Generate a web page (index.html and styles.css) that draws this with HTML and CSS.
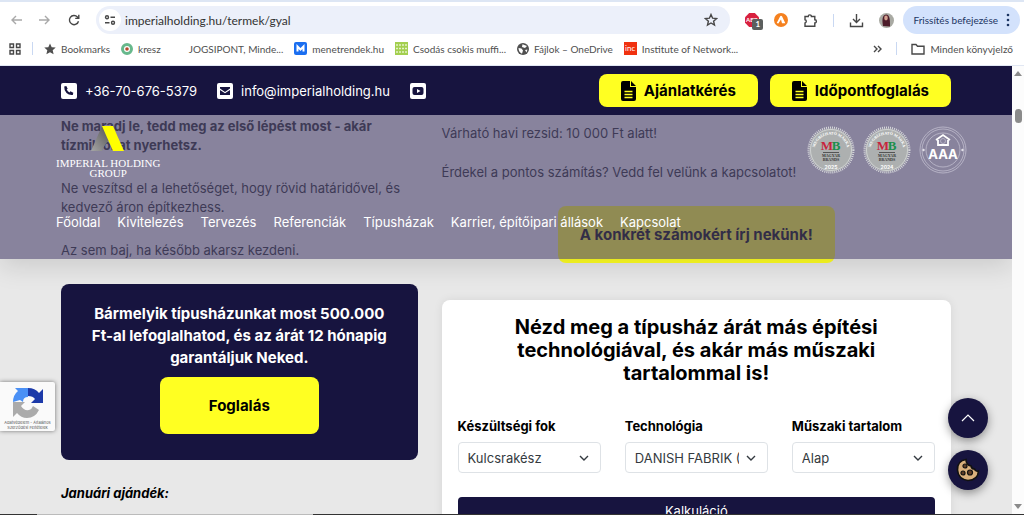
FILE: index.html
```html
<!DOCTYPE html>
<html lang="hu">
  <head>
    <meta charset="UTF-8" />
    <meta name="viewport" content="width=device-width, initial-scale=1.0" />
    <title>Imperial Holding - Gyál</title>
    <link rel="stylesheet" href="styles.css">
  </head>
  <body>
    <!-- Browser toolbar -->
    <div class="toolbar">
      <button class="tool" aria-label="Vissza"><svg class="faded" width="14" height="14" viewBox="0 0 14 14"><path d="M13 7H3M7 3L3 7l4 4" /></svg></button>
      <button class="tool" aria-label="Előre"><svg class="faded" width="14" height="14" viewBox="0 0 14 14"><path d="M1 7h10M7 3l4 4-4 4" /></svg></button>
      <button class="tool" aria-label="Újratöltés"><svg width="14" height="14" viewBox="0 0 14 14"><path d="M11.5 8.2A4.6 4.6 0 1 1 10.4 3.900L11.600 5.200M11.800 1.800v3.600H8.200" /></svg></button>
      <div class="address">
        <span class="site-info"><svg width="12" height="12" viewBox="0 0 12 12"><circle cx="3" cy="3.200" r="1.500" /><path d="M6.500 3.200H11M1 8.800h4.500" /><circle cx="9" cy="8.800" r="1.500" /></svg></span>
        <input class="url" type="text" value="imperialholding.hu/termek/gyal" aria-label="Cím" />
        <svg width="14" height="14" viewBox="0 0 14 14"><path d="M7 1.500l1.600 3.700 4 .4-3 2.600.9 3.900L7 10l-3.500 2.100.9-3.900-3-2.600 4-.4z" /></svg>
      </div>
      <div class="extensions">
        <span class="abp">
          <svg width="14" height="14" viewBox="0 0 14 14"><path class="abp-bg" d="M4.200 0h5.600L14 4.200v5.600L9.800 14H4.200L0 9.800V4.200z" /><text x="1" y="9">ABP</text></svg>
          <b>1</b>
        </span>
        <svg width="14" height="14" viewBox="0 0 14 14"><circle class="avast" cx="7" cy="7" r="7" /><path class="avast-a" d="M6.200 3.200L2.700 10l1.600.5L7 6.500l1 3.700h3.300L8 3.300q-1-1-1.800-.1z" /></svg>
        <svg width="15" height="15" viewBox="0 0 15 15"><path d="M2 3.500h3.200a1.600 1.600 0 0 1 3.200 0h3.400v3.200a1.600 1.600 0 0 1 0 3.200v3.300H2V10a1.700 1.700 0 0 0 0-3.300z" /></svg>
        <i class="bar"></i>
        <svg width="15" height="15" viewBox="0 0 15 15"><path d="M7.500 1v8M4 6l3.500 3.500L11 6M1.500 9.500v4h12v-4" /></svg>
        <svg width="15" height="15" viewBox="0 0 15 15"><circle class="face-bg" cx="7.500" cy="7.500" r="7.500" /><path class="face-hair" d="M4 13C3 8 3 2 7 1.500c4 0 4 6 4 12z" /><ellipse class="face" cx="7" cy="5" rx="1.800" ry="2.400" /></svg>
      </div>
      <button class="update">Frissítés befejezése <svg width="4" height="14" viewBox="0 0 4 14"><circle cx="2" cy="2" r="1.300" /><circle cx="2" cy="7" r="1.300" /><circle cx="2" cy="12" r="1.300" /></svg></button>
    </div>

    <!-- Bookmarks -->
    <div class="bookmarks">
      <svg class="apps" width="12" height="12" viewBox="0 0 12 12"><path d="M1 1h3.500v3.500H1zM7.500 1H11v3.500H7.500zM1 7.500h3.500V11H1zM7.500 7.500H11V11H7.500z" /></svg>
      <i class="bar"></i>
      <a href="#"><svg width="12" height="12" viewBox="0 0 12 12"><path class="solid" d="M6 .5l1.700 3.700 4 .4-3 2.700.9 4L6 9.200l-3.600 2.100.9-4-3-2.700 4-.4z" /></svg>Bookmarks</a>
      <a href="#"><svg width="12" height="12" viewBox="0 0 12 12"><circle cx="6" cy="6" r="4.500" class="kresz" /><circle cx="6" cy="6" r="1.800" class="kresz-dot" /></svg>kresz</a>
      <a href="#"><span class="fav"></span>JOGSIPONT, Minde...</a>
      <a href="#"><svg width="13" height="13" viewBox="0 0 13 13"><rect class="blue" width="13" height="13" rx="2" /><path class="white-line" d="M3.500 9.500v-5l3 3 3-3v5" /></svg>menetrendek.hu</a>
      <a href="#"><svg width="13" height="13" viewBox="0 0 13 13"><rect class="green" width="13" height="13" /><path class="dash" d="M1 3h11M1 6.500h11M1 10h11" /></svg>Csodás csokis muffi...</a>
      <a href="#"><svg width="12" height="12" viewBox="0 0 12 12"><circle class="solid" cx="6" cy="6" r="6" /><path class="land" d="M1.500 5l3 .5 1.500 2-1 3.200Q1.500 9 1.500 5zM5.500 1.200L10 3l-2 2-3-1zM8 7l2.500-.5-1 3z" /></svg>Fájlok – OneDrive</a>
      <a href="#"><svg class="inc" width="13" height="13" viewBox="0 0 13 13"><rect width="13" height="13" /><text x="1" y="9">inc</text></svg>Institute of Network...</a>
      <div class="more">
        <svg width="9" height="10" viewBox="0 0 9 10"><path d="M1 2l3 3-3 3M5 2l3 3-3 3" /></svg>
        <i class="bar"></i>
        <a href="#"><svg width="14" height="12" viewBox="0 0 14 12"><path d="M1 1.500h4l1.500 1.700H13V11H1z" /></svg>Minden könyvjelző</a>
      </div>
    </div>

    <div class="window">
      <div class="page">
        <!-- Header -->
        <header class="header">
          <div class="topbar">
            <a href="#"><svg width="16" height="16" viewBox="0 0 16 16"><rect width="16" height="16" rx="2" /><path class="navy" d="M5.300 3l1.400 2.700-1 .9q1 2 2.800 2.800l.9-1.100 2.900 1.400-.5 2.300Q8 12.500 5.500 10T3.200 3.500z" /></svg>+36-70-676-5379</a>
            <a href="#"><svg width="16" height="16" viewBox="0 0 16 16"><rect width="16" height="16" rx="2" /><path class="navy" d="M3 4h10v1.600L8 9 3 5.600zM3 7l5 3.300L13 7v5H3z" /></svg>info@imperialholding.hu</a>
            <a href="#" aria-label="YouTube"><svg width="16" height="16" viewBox="0 0 16 16"><rect width="16" height="16" rx="2" /><rect class="navy" x="2.500" y="4" width="11" height="8" rx="2" /><path d="M7 6l3.500 2L7 10z" /></svg></a>
            <div class="actions">
              <button class="yellow"><svg width="15" height="20" viewBox="0 0 15 20"><path d="M2 0h7v6h6v12q0 2-2 2H2q-2 0-2-2V2q0-2 2-2zM10 0l5 5h-5z" /><path class="lines" d="M3.500 10.500h8M3.500 13.500h8M3.500 16.500h8" /></svg>Ajánlatkérés</button>
              <button class="yellow"><svg width="15" height="20" viewBox="0 0 15 20"><path d="M2 0h7v6h6v12q0 2-2 2H2q-2 0-2-2V2q0-2 2-2zM10 0l5 5h-5z" /><path class="lines" d="M3.500 10.500h8M3.500 13.500h8M3.500 16.500h8" /></svg>Időpontfoglalás</button>
            </div>
          </div>
          <div class="menu">
            <div class="brand">
              <a class="logo" href="#">
                <svg width="34" height="26" viewBox="0 0 34 26">
                  <defs><linearGradient id="leg" x1="0" y1="1" x2="1" y2="0"><stop offset="0" stop-color="#a6a6a6" /><stop offset="1" stop-color="#505050" /></linearGradient></defs>
                  <path fill="url(#leg)" d="M11 0h2l6 14q-5 3-8 11H0z" />
                  <path fill="#ff0" d="M11 0h11l11 25H22z" />
                </svg>
                <span>IMPERIAL HOLDING<br />GROUP</span>
              </a>
              <div class="awards">
                <svg class="award" width="48" height="48" viewBox="0 0 48 48">
                  <defs><path id="arc" d="M7.500 25a16.500 16.500 0 0 1 33 0" /></defs>
                  <circle class="teeth" cx="24" cy="24" r="22" /><circle class="disc" cx="24" cy="24" r="21.500" /><circle class="ring" cx="24" cy="24" r="20.500" />
                  <text class="around"><textPath href="#arc" startOffset="50%">MEGBÍZHATÓ MÁRKA</textPath></text>
                  <text class="m" x="20" y="24">M</text><text class="b" x="29" y="24">B</text>
                  <path class="rule" d="M16 26.500h16" /><text class="tiny" x="24" y="31">MAGYAR</text><text class="tiny" x="24" y="35">BRANDS</text><text class="year" x="24" y="43">2025</text>
                </svg>
                <svg class="award" width="48" height="48" viewBox="0 0 48 48">
                  <circle class="teeth" cx="24" cy="24" r="22" /><circle class="disc" cx="24" cy="24" r="21.500" /><circle class="ring" cx="24" cy="24" r="20.500" />
                  <text class="around"><textPath href="#arc" startOffset="50%">MEGBÍZHATÓ MÁRKA</textPath></text>
                  <text class="m" x="20" y="24">M</text><text class="b" x="29" y="24">B</text>
                  <path class="rule" d="M16 26.500h16" /><text class="tiny" x="24" y="31">MAGYAR</text><text class="tiny" x="24" y="35">BRANDS</text><text class="year" x="24" y="43">2024</text>
                </svg>
                <svg class="rating" width="48" height="48" viewBox="0 0 48 48">
                  <circle cx="24" cy="24" r="23" /><circle cx="24" cy="24" r="21" /><circle cx="24" cy="24" r="17" />
                  <path class="roof" d="M17 14l7-5 7 5M19 14v5h10v-5" /><circle cx="24" cy="15" r="2.500" /><circle class="dot" cx="4.500" cy="24" r="1" /><circle class="dot" cx="43.500" cy="24" r="1" />
                  <text x="24" y="33">AAA</text>
                </svg>
              </div>
            </div>
            <nav>
              <a href="#">Főoldal</a>
              <a href="#">Kivitelezés</a>
              <a href="#">Tervezés</a>
              <a href="#">Referenciák</a>
              <a href="#">Típusházak</a>
              <a href="#">Karrier, építőipari állások</a>
              <a href="#">Kapcsolat</a>
            </nav>
          </div>
        </header>

        <!-- Content -->
        <main class="content">
          <section class="left">
            <p><strong>Ne maradj le, tedd meg az első lépést most - akár tízmilliókat nyerhetsz.</strong></p>
            <p>Ne veszítsd el a lehetőséget, hogy rövid határidővel, és kedvező áron építkezhess.</p>
            <p>Az sem baj, ha később akarsz kezdeni.</p>
            <div class="booking">
              <h3>Bármelyik típusházunkat most 500.000 Ft-al lefoglalhatod, és az árát 12 hónapig garantáljuk Neked.</h3>
              <button class="yellow big">Foglalás</button>
            </div>
            <p class="gift">Januári ajándék:</p>
          </section>
          <section class="right">
            <p>Várható havi rezsid: 10 000 Ft alatt!</p>
            <p>Érdekel a pontos számítás? Vedd fel velünk a kapcsolatot!</p>
            <button class="yellow big">A konkrét számokért írj nekünk!</button>
            <div class="calculator">
              <h2>Nézd meg a típusház árát más építési technológiával, és akár más műszaki tartalommal is!</h2>
              <form class="fields">
                <div class="field">
                  <label for="fok">Készültségi fok</label>
                  <div class="select">
                    <select id="fok"><option>Kulcsrakész</option></select>
                    <svg width="10" height="6" viewBox="0 0 10 6"><path d="M1 1l4 4 4-4" /></svg>
                  </div>
                </div>
                <div class="field">
                  <label for="tech">Technológia</label>
                  <div class="select">
                    <select id="tech"><option>DANISH FABRIK (Tégla)</option></select>
                    <svg width="10" height="6" viewBox="0 0 10 6"><path d="M1 1l4 4 4-4" /></svg>
                  </div>
                </div>
                <div class="field">
                  <label for="tartalom">Műszaki tartalom</label>
                  <div class="select">
                    <select id="tartalom"><option>Alap</option></select>
                    <svg width="10" height="6" viewBox="0 0 10 6"><path d="M1 1l4 4 4-4" /></svg>
                  </div>
                </div>
              </form>
              <div class="result">Kalkuláció</div>
            </div>
          </section>
        </main>

        <div class="recaptcha">
          <svg width="32" height="32" viewBox="0 0 32 32">
            <path fill="#4a90f5" d="M1 15Q1 8 6 4L3 1h13v9q-5 0-5 5l-3-2z" />
            <path fill="#1c3aa9" d="M16 1q7 0 11 5l4-4v14H19l4-4q-2-3-7-3z" />
            <path fill="#ababab" d="M1 15h12l-4 4q3 5 8 4 3-1 4-4l6 4q-4 8-12 8-6 0-10-5l-4 4z" />
          </svg>
          <span>Adatvédelem - Általános Szerződési Feltételek</span>
        </div>

        <div class="floating">
          <button aria-label="Fel"><svg width="14" height="8" viewBox="0 0 14 8"><path d="M1 7l6-6 6 6" /></svg></button>
          <button aria-label="Sütik"><svg width="24" height="24" viewBox="0 0 24 24"><path class="cookie" d="M10 1.500Q1 3 1.500 12 2 21 12 22.500q10-.5 10.500-9.500-3 1-4-2-3 0-3.500-3Q10 7 10 1.500z" /><circle cx="9" cy="8" r="2" /><circle cx="7" cy="15" r="2" /><circle cx="14" cy="14.500" r="2.500" /></svg></button>
        </div>
      </div>
      <div class="scrollbar">
        <svg width="8" height="5" viewBox="0 0 8 5"><path d="M0 5l4-5 4 5z" /></svg>
        <i class="thumb"></i>
        <svg class="down" width="8" height="5" viewBox="0 0 8 5"><path d="M0 0l4 5 4-5z" /></svg>
      </div>
    </div>
    <div class="taskbar"></div>
  </body>
</html>
```

FILE: styles.css
```css
* {
  box-sizing: border-box;
}
body {
  font-family: Inter, sans-serif;
  margin: 0;
  height: 100vh;
  display: flex;
  flex-direction: column;
  overflow: hidden;
  font-size: 13px;
  color: #212529;
}
a {
  color: inherit;
  text-decoration: none;
}
button {
  font-family: inherit;
  border: none;
  cursor: pointer;
}
svg {
  display: block;
  flex: none;
}

/* Browser */
.toolbar {
  display: flex;
  align-items: center;
  height: 38px;
  padding: 0 4px 0 9px;
  border-top: 2px solid #dde6f4;
  background-color: #fff;
  font-family: Lato, sans-serif;
}
.toolbar svg,
.bookmarks svg {
  fill: none;
  stroke: #474747;
  stroke-width: 1.4;
}
.tool {
  background: none;
  padding: 0;
  margin-right: 15px;
}
.toolbar .faded {
  stroke: #a9a9a9;
}
.address {
  flex: 1;
  display: flex;
  align-items: center;
  height: 28px;
  padding: 0 12px 0 3px;
  border-radius: 14px;
  background-color: #ecf0fa;
}
.site-info {
  padding: 5px;
  border-radius: 50%;
  background-color: #fff;
}
.url {
  flex: 1;
  min-width: 0;
  border: none;
  background: none;
  padding: 0 4px;
  font-family: Lato, sans-serif;
  font-size: 12px;
  color: #333;
}
.extensions {
  display: flex;
  align-items: center;
  gap: 15px;
  padding: 0 9px 0 15px;
}
.bar {
  width: 1px;
  height: 13px;
  background-color: #c9d8f2;
}
.abp {
  position: relative;
}
.toolbar .abp-bg {
  fill: #d8213f;
  stroke: none;
}
.abp text {
  font-size: 6px;
  font-weight: bold;
  fill: #fff;
  stroke: none;
}
.abp b {
  position: absolute;
  left: 7px;
  top: 6px;
  padding: 0 3px;
  border-radius: 2px;
  background-color: #5b5f5e;
  color: #fff;
  font-size: 8px;
  line-height: 11px;
}
.avast {
  fill: #f5811f;
  stroke: none;
}
.avast-a {
  fill: #fff;
  stroke: none;
}
.face-bg {
  fill: #a9aaa3;
  stroke: none;
}
.face-hair {
  fill: #4d1c2a;
  stroke: none;
}
.face {
  fill: #d3a08e;
  stroke: none;
}
.update {
  display: flex;
  align-items: center;
  gap: 8px;
  height: 28px;
  padding: 0 10px;
  border-radius: 14px;
  background-color: #d3e2fc;
  color: #1c3563;
  font-size: 10px;
}
.toolbar .update svg {
  fill: #1c3563;
  stroke: none;
}
.bookmarks {
  display: flex;
  align-items: center;
  gap: 11px;
  height: 28px;
  padding: 0 11px 6px 9px;
  border-bottom: 1px solid #e1e7f3;
  background-color: #fff;
  color: #4f4f4f;
  font-family: Lato, sans-serif;
  font-size: 10px;
  white-space: nowrap;
}
.bookmarks a {
  display: flex;
  align-items: center;
  gap: 5px;
}
.fav {
  width: 12px;
}
.bookmarks .solid {
  fill: #4f4f4f;
  stroke: none;
}
.kresz {
  stroke: #67b88c;
  stroke-width: 3;
}
.kresz-dot {
  fill: #b5482d;
  stroke: none;
}
.blue {
  fill: #1a6ef0;
  stroke: none;
}
.white-line {
  stroke: #fff;
  stroke-width: 2;
}
.green {
  fill: #a3cf4f;
  stroke: none;
}
.dash {
  stroke: #e4f2c6;
  stroke-dasharray: 2 1;
}
.land {
  fill: #fff;
  stroke: none;
}
.inc rect {
  fill: #f0310f;
  stroke: none;
}
.inc text {
  font-size: 8px;
  fill: #fff;
  stroke: none;
}
.more {
  display: flex;
  align-items: center;
  gap: 14px;
  margin-left: auto;
}

/* Window */
.window {
  flex: 1;
  min-height: 0;
  display: flex;
}
.page {
  flex: 1;
  position: relative;
  overflow: hidden;
  background-color: #e8e8e8;
}
.scrollbar {
  width: 12px;
  display: flex;
  flex-direction: column;
  align-items: center;
  padding: 5px 0;
  background-color: #fcfcfc;
}
.scrollbar svg {
  fill: #8b8b8b;
}
.thumb {
  width: 7px;
  height: 14px;
  margin-top: 33px;
  border-radius: 4px;
  background-color: #8b8b8b;
}
.scrollbar .down {
  margin-top: auto;
}
.taskbar {
  height: 1px;
  background: linear-gradient(to right, #333 37px, #bbb 37px, #bbb 313px, #333 313px);
}

/* Header lies over the scrolled content */
.header {
  position: absolute;
  top: 0;
  left: 0;
  right: 0;
  z-index: 2;
  color: #fff;
  box-shadow: 0 8px 24px rgba(0, 0, 0, 0.12);
}
.topbar {
  display: flex;
  align-items: center;
  gap: 20px;
  height: 49px;
  padding: 0 61px;
  background-color: #17143f;
}
.topbar a {
  display: flex;
  align-items: center;
  gap: 8px;
}
.topbar a svg {
  fill: #fff;
}
.topbar .navy {
  fill: #17143f;
}
.actions {
  display: flex;
  gap: 12px;
  margin-left: auto;
}
.yellow {
  display: flex;
  align-items: center;
  gap: 8px;
  height: 33px;
  padding: 0 22px;
  border-radius: 8px;
  background-color: #ffff22;
  color: #000;
  font-size: 15px;
  font-weight: 700;
}
.lines {
  stroke: #ffff22;
  stroke-width: 1.3;
}
.menu {
  height: 144px;
  padding: 11px 45px 0 56px;
  background-color: rgba(79, 72, 112, 0.63);
}
.brand {
  display: flex;
  justify-content: space-between;
}
.logo {
  display: flex;
  flex-direction: column;
  align-items: center;
  text-align: center;
  font-family: "Liberation Serif", serif;
  font-size: 11px;
  line-height: 10px;
}
.logo span {
  margin-top: 6px;
}
.awards {
  display: flex;
  gap: 8px;
}
.award text {
  text-anchor: middle;
  font-family: "Liberation Serif", serif;
  font-weight: bold;
}
.teeth {
  fill: none;
  stroke: #d5d6da;
  stroke-width: 3;
  stroke-dasharray: 1 1;
}
.disc {
  fill: #adb0b0;
}
.ring {
  fill: none;
  stroke: #cfd2d2;
}
.award .around {
  font-size: 4px;
  fill: #fff;
}
.award .m {
  font-size: 13px;
  fill: #c8243c;
}
.award .b {
  font-size: 13px;
  fill: #1c8f4c;
}
.rule {
  stroke: #555;
}
.award .tiny {
  font-size: 4px;
  fill: #333;
}
.award .year {
  font-family: Inter, sans-serif;
  font-size: 5px;
  fill: #fff;
}
.rating circle {
  fill: none;
  stroke: #c9c6d6;
  stroke-width: 0.7;
}
.roof {
  fill: none;
  stroke: #fff;
  stroke-width: 1.8;
}
.rating .dot {
  fill: #fff;
}
.rating text {
  text-anchor: middle;
  font-size: 13px;
  font-weight: 700;
  fill: #fff;
}
nav {
  display: flex;
  gap: 17px;
  margin-top: 35px;
  line-height: 19px;
  white-space: nowrap;
}

/* Content */
.content {
  display: grid;
  grid-template-columns: 7fr 10fr;
  gap: 24px;
  padding: 51px 61px 0;
  line-height: 19px;
}
.content p {
  margin: 0 0 24px;
}
.right {
  padding-top: 7px;
}
.right p {
  margin-bottom: 20px;
  white-space: nowrap;
}
.big {
  justify-content: center;
  height: 57px;
  margin: 0 auto;
}
.right > .big {
  margin-top: 24px;
}
.booking {
  padding: 19px 25px 26px;
  border-radius: 8px;
  background-color: #17143f;
  color: #fff;
  text-align: center;
}
.booking h3 {
  margin: 0 0 8px;
  font-size: 15px;
  line-height: 22px;
}
.booking .big {
  width: 159px;
}
.content .gift {
  margin-top: 24px;
  color: #000;
  font-weight: 700;
  font-style: italic;
}
.calculator {
  margin-top: 37px;
  padding: 16px;
  border-radius: 8px;
  background-color: #fff;
  box-shadow: 0 0 10px rgba(0, 0, 0, 0.08);
  color: #000;
}
.calculator h2 {
  margin: 0 auto 32px;
  max-width: 400px;
  font-size: 20px;
  line-height: 23px;
  text-align: center;
}
.fields {
  display: grid;
  grid-template-columns: repeat(3, 1fr);
  gap: 24px;
}
.field label {
  display: block;
  margin-bottom: 6px;
  font-weight: 700;
}
.select {
  position: relative;
}
.select select {
  appearance: none;
  display: block;
  width: 100%;
  height: 31px;
  padding: 0 28px 0 9px;
  border: 1px solid #dee2e6;
  border-radius: 4px;
  background-color: #fff;
  color: #343a40;
  font-family: inherit;
  font-size: 13px;
}
.select svg {
  position: absolute;
  right: 12px;
  top: 13px;
  fill: none;
  stroke: #343a40;
  stroke-width: 1.4;
  pointer-events: none;
}
.result {
  height: 60px;
  margin-top: 24px;
  padding-top: 5px;
  border-radius: 4px;
  background-color: #17143f;
  color: #fff;
  text-align: center;
}

/* Floating widgets */
.recaptcha {
  position: absolute;
  left: 0;
  bottom: 83px;
  z-index: 3;
  width: 55px;
  height: 49px;
  padding-top: 5px;
  border-radius: 0 2px 2px 0;
  background-color: #fafafa;
  box-shadow: 0 0 4px rgba(0, 0, 0, 0.5);
  color: #555;
  font-size: 4px;
  line-height: 5px;
  text-align: center;
}
.recaptcha svg {
  margin: 0 auto 1px;
}
.recaptcha span {
  display: block;
}
.floating {
  position: absolute;
  right: 24px;
  bottom: 24px;
  z-index: 3;
  display: flex;
  flex-direction: column;
  gap: 12px;
}
.floating button {
  display: flex;
  align-items: center;
  justify-content: center;
  width: 40px;
  height: 40px;
  padding: 0;
  border-radius: 50%;
  background-color: #17143f;
  box-shadow: 0 3px 10px rgba(0, 0, 0, 0.4);
}
.floating svg {
  fill: none;
  stroke: #fff;
  stroke-width: 1.2;
}
.floating .cookie {
  fill: #d9b07c;
  stroke: #111;
  stroke-width: 1.6;
}
.floating circle {
  fill: #5e3c25;
  stroke: #111;
}
```
